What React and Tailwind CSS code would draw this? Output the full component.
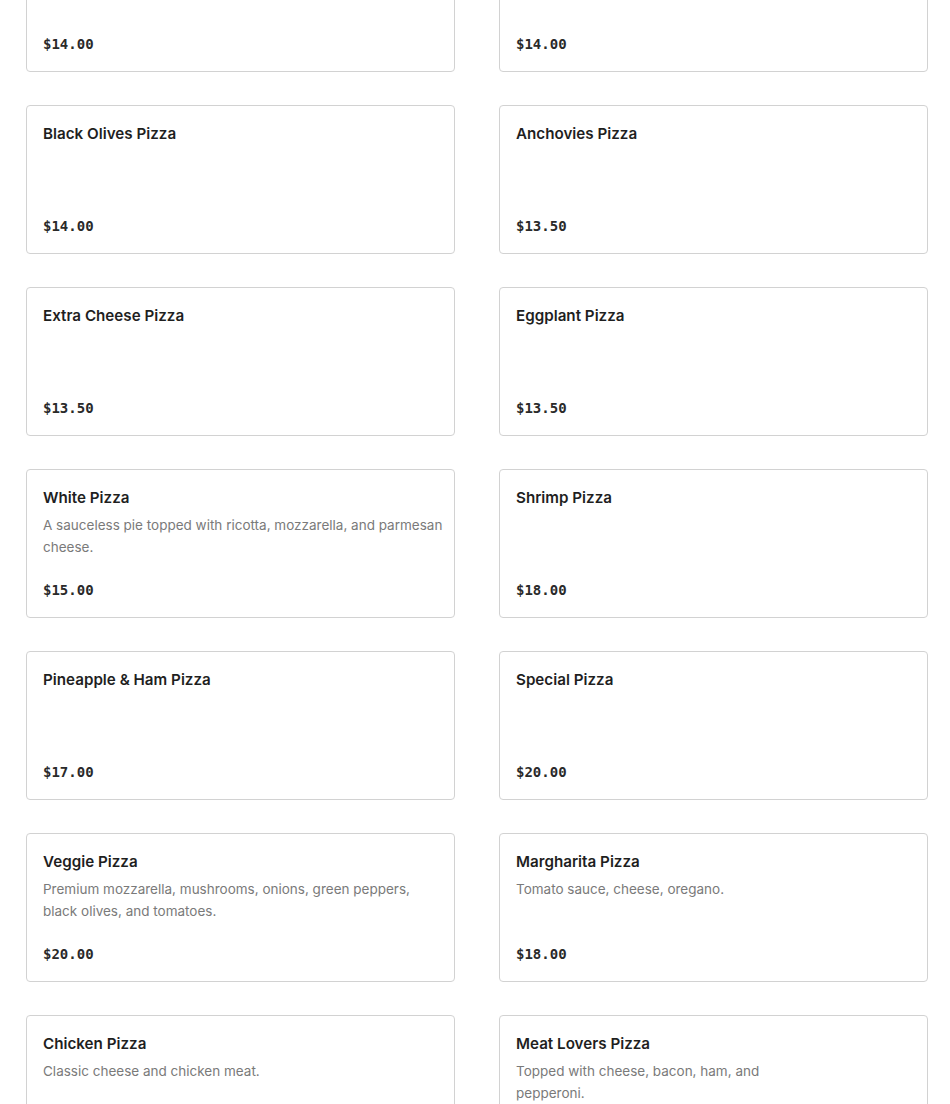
const pizzas = [
  { name: "Cheese Pizza", price: "$14.00" },
  { name: "Pepperoni Pizza", price: "$14.00" },
  { name: "Black Olives Pizza", price: "$14.00" },
  { name: "Anchovies Pizza", price: "$13.50" },
  { name: "Extra Cheese Pizza", price: "$13.50" },
  { name: "Eggplant Pizza", price: "$13.50" },
  {
    name: "White Pizza",
    desc: "A sauceless pie topped with ricotta, mozzarella, and parmesan cheese.",
    price: "$15.00",
  },
  { name: "Shrimp Pizza", price: "$18.00" },
  { name: "Pineapple & Ham Pizza", price: "$17.00" },
  { name: "Special Pizza", price: "$20.00" },
  {
    name: "Veggie Pizza",
    desc: "Premium mozzarella, mushrooms, onions, green peppers, black olives, and tomatoes.",
    price: "$20.00",
    narrow: true,
  },
  { name: "Margharita Pizza", desc: "Tomato sauce, cheese, oregano.", price: "$18.00" },
  { name: "Chicken Pizza", desc: "Classic cheese and chicken meat.", price: "$18.00" },
  {
    name: "Meat Lovers Pizza",
    desc: "Topped with cheese, bacon, ham, and pepperoni.",
    price: "$20.00",
    short: true,
  },
];

function ItemCard({ item }) {
  return (
    <div className="flex h-[149px] flex-col rounded-[4px] border border-[#d2d2d2] bg-white px-4 pt-[16.5px] pb-[16.5px]">
      <div className="text-[15.2px] font-semibold leading-6 text-[#1f1f1f]">{item.name}</div>
      {item.desc && (
        <p
          className={
            "mt-[3.5px] mr-[-12px] text-[13.5px] leading-[22px] text-[#7a7a7a] " +
            (item.short ? "max-w-[250px]" : item.narrow ? "max-w-[372px]" : "max-w-[404px]")
          }
        >
          {item.desc}
        </p>
      )}
      <div
        className="mt-auto text-[14px] font-bold leading-5 text-[#2a2a2a]"
        style={{ fontFamily: '"DejaVu Sans Mono", "Liberation Mono", monospace' }}
      >
        {item.price}
      </div>
    </div>
  );
}

export default function App() {
  return (
    <div
      className="h-[1104px] overflow-hidden bg-white"
      style={{ fontFamily: 'Inter, "Noto Sans", sans-serif' }}
    >
      <div className="mt-[-77.5px] grid grid-cols-[429px_429px] gap-x-[44px] gap-y-[33px] pl-[26px]">
        {pizzas.map((p) => (
          <ItemCard key={p.name} item={p} />
        ))}
      </div>
    </div>
  );
}
